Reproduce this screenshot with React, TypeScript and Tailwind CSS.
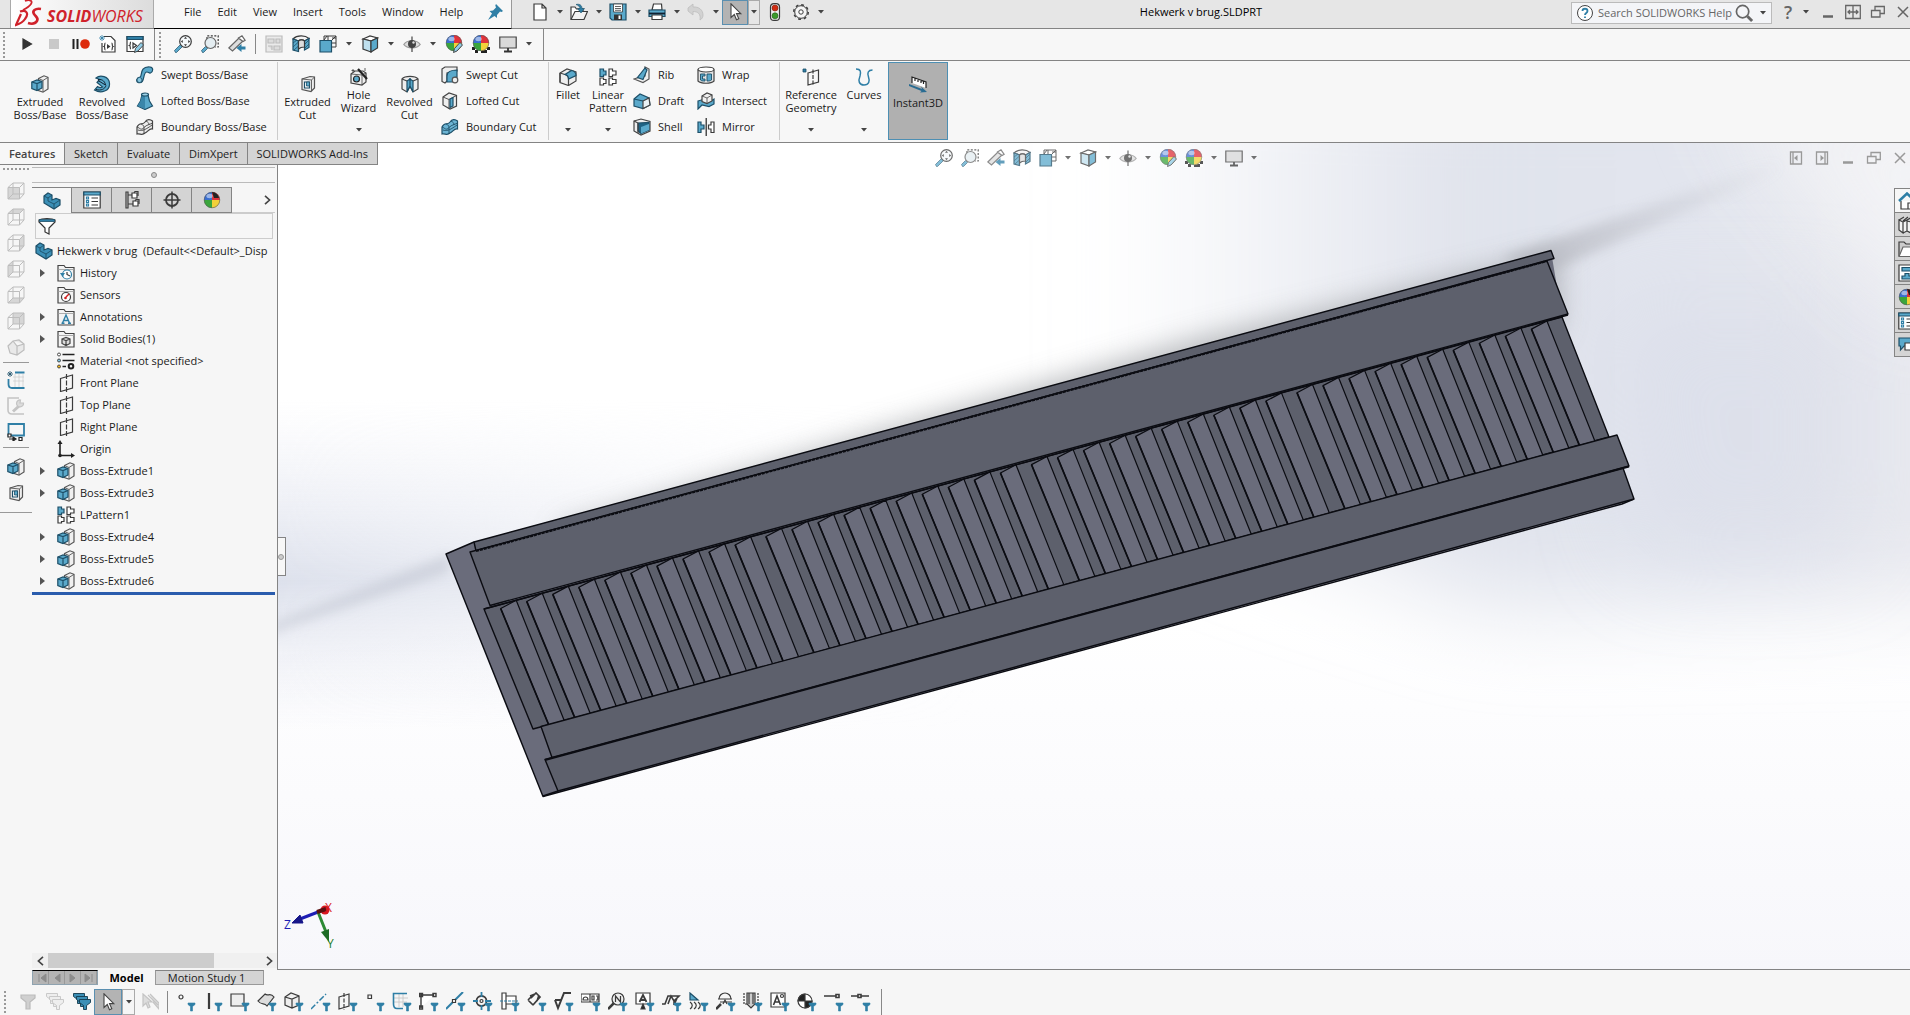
import React from "react";
import clsx from "clsx";

type IconProps = { className?: string };
type IconType = React.FC<IconProps>;

const INK = "#3b3b3b";
const BLUE = "#5aa9cb";
const DEEP = "#1d4f68";
const STEEL = "#2f7fa6";

/* Every glyph is drawn on an 18 x 18 grid. */
const glyph = (children: React.ReactNode): IconType =>
  function Glyph({ className = "size-[18px]" }) {
    return (
      <svg viewBox="0 0 18 18" fill="none" stroke={INK} strokeWidth="1.2" className={clsx("shrink-0", className)} aria-hidden="true">
        {children}
      </svg>
    );
  };

const Ball = (
  <>
    <path d="M9 0A8 8 0 0 0 1 8H9Z" fill="#3a6fd0" stroke="none" />
    <path d="M9 0A8 8 0 0 1 17 8H9Z" fill="#e0323a" stroke="none" />
    <path d="M1 8A8 8 0 0 0 9 16V8Z" fill="#3aa53c" stroke="none" />
    <path d="M17 8A8 8 0 0 1 9 16V8Z" fill="#f2d13a" stroke="none" />
    <ellipse cx="6.5" cy="4" rx="3.2" ry="2.2" fill="#fff" opacity=".5" stroke="none" />
    <circle cx="9" cy="8" r="7.8" stroke="#555" strokeWidth=".6" />
  </>
);

const Pencil = <path d="M8.5 17.5L9.5 13.5L15 7.5L17.5 10L12 16Z" fill="#8fcbe4" stroke={INK} strokeWidth=".9" />;

const NewDoc = glyph(<path d="M3 1h8l4 4v12H3zM11 1v4h4" fill="#fff" />);
const OpenDoc = glyph(
  <>
    <path d="M1 16V4h4l1.5 2H13v3" fill="#fff" />
    <path d="M1 16.5L5 8.5h12.5L14 16.5z" fill="#f2f2f2" />
    <path d="M6 1.5c4-1 6 1 6 4h2.500L11 10 7.500 5.500H10c0-2-1.500-3-4-4z" fill={STEEL} stroke={DEEP} strokeWidth=".6" />
  </>
);
const Save = glyph(
  <>
    <path d="M1 1h16v16H3l-2-2z" fill={BLUE} stroke={DEEP} />
    <path d="M4.5 1h9v8h-9z" fill="#fff" stroke={INK} strokeWidth=".8" />
    <path d="M6 3.5h6M6 5.5h6M6 7.3h6" strokeWidth=".8" />
    <path d="M5 11.5h8V17H5z" fill="#333" stroke="none" />
    <path d="M9.5 12.5h2V16h-2z" fill="#fff" stroke="none" />
  </>
);
const Print = glyph(
  <>
    <path d="M4 7L5.5 1h8L14 7z" fill="#fff" />
    <path d="M1 7h16v6.5H1z" fill={BLUE} stroke={DEEP} />
    <path d="M1 10.5h16" stroke="#123" strokeWidth="1.8" />
    <path d="M4 12h10v4.5H4z" fill="#fff" />
  </>
);
const Undo = glyph(
  <path d="M1 5L6 1v3c6-.5 10 3 10 8 0 2-1 4-3 5 1-6-2-8.5-7-8.5V12L1 8z" fill="#d2d2d2" stroke="#bdbdbd" strokeWidth=".8" />
);
const Cursor = glyph(
  <path d="M5 .8V14.5L8.3 11.5L10.5 16.8L12.8 15.8L10.5 10.6H14.8Z" fill="#fff" stroke="#444" strokeWidth="1.1" />
);
const Traffic = glyph(
  <>
    <rect x="4.5" y=".6" width="9" height="16.8" rx="3.5" fill="#eee" />
    <circle cx="9" cy="5" r="3" fill="#d22c12" stroke="#7a1a0a" strokeWidth=".6" />
    <circle cx="9" cy="12.8" r="3" fill="#3b9a2b" stroke="#1c5a12" strokeWidth=".6" />
  </>
);
const Gear = glyph(
  <>
    <circle cx="9" cy="9" r="6.3" fill="#f5f5f5" strokeWidth="1" />
    <circle cx="9" cy="9" r="7.3" strokeDasharray="2.8 2.93" strokeWidth="1.4" />
    <circle cx="9" cy="9" r="2.2" fill="#fff" strokeWidth="1" />
  </>
);
const Pin = glyph(
  <path d="M10 1L17 8L15.5 9L14 8.5L11 12V15L8.5 13L2 17L6 10.5L3.5 8L7 7.5L10 4.500L9.3 2.5Z" fill={STEEL} stroke="none" />
);
const Play = glyph(<path d="M5 4L13.5 9L5 14Z" fill="#333" stroke="#333" />);
const Stop = glyph(<path d="M4 4h10v10H4z" fill="#c9c9c9" stroke="none" />);
const Record = glyph(
  <>
    <path d="M1.5 4v10M5.500 4v10" strokeWidth="2" stroke="#222" />
    <circle cx="13" cy="9" r="4.8" fill="#dd2a0c" stroke="none" />
  </>
);
const MacroNew = glyph(
  <>
    <path d="M5 1.5h7l4 4V17H3V8" fill="#fff" />
    <path d="M6.5 8c-1.5 0 0 3-1.5 3.5C6.5 12 5 15 6.5 15M12.5 8c1.5 0 0 3 1.5 3.5-1.5.5 0 3.5-1.5 3.5" />
    <path d="M8 9l3.5 2.5L8 14z" fill={INK} stroke="none" />
    <path d="M3 0v6M0 3h6M1 1l4 4M5 1L1 5" stroke={STEEL} strokeWidth=".8" />
  </>
);
const MacroEdit = glyph(
  <>
    <path d="M1 1.500h16v15H1z" fill="#fff" />
    <path d="M1 1.500h16v3H1z" fill={STEEL} stroke={DEEP} />
    <path d="M5 7c-1.500 0 0 3-1.500 3.500C5 11 3.500 14 5 14M7 8l3.500 2.500L7 13z" />
    {Pencil}
  </>
);
const ZoomFit = glyph(
  <>
    <path d="M1.5 17.5L.5 15.5L6.5 9.5L8.5 11.5L2.5 17.5Z" fill={BLUE} stroke={DEEP} strokeWidth=".7" />
    <circle cx="11.5" cy="6.500" r="5.8" fill="#f4f8fa" />
    <path d="M11.5 1.800l1.500 2h-3zM11.5 11.200l1.500-2h-3zM6.800 6.500l2-1.500v3zM16.200 6.500l-2-1.500v3z" fill={INK} stroke="none" />
  </>
);
const ZoomArea = glyph(
  <>
    <path d="M6 4V.8h11.2V12H14" strokeDasharray="2 1.5" />
    <path d="M1.500 17.500L.5 15.500L4.500 11.500L6.500 13.500L2.500 17.500Z" fill={BLUE} stroke={DEEP} strokeWidth=".7" />
    <circle cx="9.5" cy="8" r="5.5" fill="#e4edf1" stroke="#666" />
  </>
);
const PrevView = glyph(
  <>
    <path d="M.8 13L11 3l4 3L4.500 16Z" fill="#ddd" stroke="#666" />
    <path d="M10.5 3L14 .8l3.200 4.500L15 6.500Z" fill="#fff" stroke="#666" />
    <path d="M17.500 11.500h-4V9L8.500 13l5 4v-2.500h4Z" fill={STEEL} stroke="none" />
  </>
);
const Drawing = glyph(
  <g stroke="#bcbcbc">
    <path d="M1 1h16v16H1z" fill="#eaeaea" />
    <path d="M3 4h6v4H3zM11 4h4v4h-4zM3 11h4v4M9 11h6v4H9z" fill="#dcdcdc" />
  </g>
);
const Section = glyph(
  <>
    <path d="M1 4C5 0 13 0 17 3.5L12.5 6C11 4.5 8 4.5 6.5 6Z" fill="#f4f4f4" />
    <path d="M1 4L6.5 6V16.5L1 15Z" fill={BLUE} stroke={DEEP} />
    <path d="M17 3.5L12.5 6V15L17 12.5Z" fill={BLUE} stroke={DEEP} />
    <path d="M6.5 6c1.5-1.5 4.500-1.500 6 0v6c-2 0-4 0-6 2z" fill="#ddd" />
    <path d="M1 8l4-3M1 12l5.500-5M2 15l4.500-4M13 9l4-4M13 13l4-4" stroke={DEEP} strokeWidth=".8" />
  </>
);
const ViewCube = glyph(
  <>
    <path d="M5 5V1h12v11h-4M13 5l4-4M9 5V1M13 3h4M5 5L8 1M13 8h4" strokeWidth="1" />
    <path d="M1 5.500h11.500V17H1z" fill={BLUE} stroke={DEEP} />
  </>
);
const ShadedCube = glyph(
  <>
    <path d="M2 4L9 1L16.5 3L10 6Z" fill="#fff" />
    <path d="M2 4L10 6V17L2 14Z" fill="#bfe0ee" />
    <path d="M10 6L16.500 3V13L10 17Z" fill={BLUE} />
  </>
);
const Eye = glyph(
  <>
    <path d="M.8 9.500C4 4.500 14 4.500 17.200 9.500C14 14 4 14 .8 9.500Z" fill="#ddd" stroke="#999" />
    <circle cx="9" cy="9" r="4" fill="#444" stroke="none" />
    <path d="M9 1.500V17" stroke="#444" />
    <circle cx="10.5" cy="7.5" r="1.2" fill="#ddd" stroke="none" />
  </>
);
const Appearance = glyph(<>{Ball}{Pencil}</>);
const Scene = glyph(
  <>
    <path d="M0 9h18v9H0z" fill="#222" stroke="none" />
    <path d="M0 9h3v3H0zM15 9h3v3h-3zM3 12h3v3H3zM12 12h3v3h-3zM0 15h3v3H0zM6 15h3v3H6zM15 15h3v3h-3z" fill="#fff" stroke="none" />
    {Ball}
  </>
);
const Monitor = glyph(
  <>
    <path d="M.8 2h16.400v11H.8z" fill="#d9d9d9" stroke="#444" />
    <path d="M9 13v3M5 16.500h8" stroke="#333" strokeWidth="1.800" />
  </>
);

const Extrude = glyph(
  <>
    <path d="M7.500 3.500L13 .8L17 2.300V14L12 17.200L7.500 15.500Z" fill="#f0f0f0" stroke="#555" />
    <path d="M12 5.500V17M12 5.500L17 2.300M7.500 3.500L12 5.500" stroke="#555" strokeWidth=".9" />
    <path d="M.8 7L6 5L11 6.500V13L6 15.500L.8 13.500Z" fill={BLUE} stroke={DEEP} />
    <path d="M.8 7L6 8.500L11 6.500M6 8.500V15.500" stroke={DEEP} />
  </>
);
const Revolve = glyph(
  <>
    <path d="M3 3C7-.5 16 1 16.5 8.5C17 16 8 19 1.500 15L4.500 11.500C6 12.500 8 13 9.500 12L4 7.500L6.500 4.500Z" fill={BLUE} stroke={DEEP} />
    <path d="M5 4.500C10 4 12 7 12.500 10L5 5.500M3 14.500c5 1.500 9-.5 10-4" stroke="#123" strokeWidth="1" />
  </>
);
const Sweep = glyph(
  <>
    <path d="M2 16.500C10 18.500 6 6 11 6C12.500 6 13 7.500 14.500 7C17 6 18 1.500 14 1C3 0 6.500 11 4 11C1 11-.5 15 2 16.500Z" fill={BLUE} stroke={DEEP} />
    <circle cx="3.500" cy="14" r="2.500" fill="#86c6e0" stroke={DEEP} strokeWidth=".8" />
  </>
);
const Loft = glyph(
  <>
    <path d="M6 3L4.500 9L1.500 14L9 17.500L16.500 14L13.500 9L12 3Z" fill={BLUE} stroke={DEEP} />
    <path d="M9 4V17L1.500 14L4.500 9L6 3Z" fill="#3a86aa" stroke="none" />
    <ellipse cx="9" cy="2.500" rx="3.500" ry="1.500" fill="#9cd2e8" stroke={DEEP} />
  </>
);
const boundary = (fill: string, edge: string) =>
  glyph(
    <>
      <path d="M1 9C4 3 6 8 9 4C11 1 14 1 16.500 3V11C13 10 12 14 9 15C6 18 4 15 1 16Z" fill={fill} stroke={edge} />
      <path d="M1 9C4 10 5 13 8 9.500C11 6.500 13 7 16.500 5M5 6c3 1 3 3 3 4v6M10 3c2 1 3 2 3 4M2 12c3 1 6 1 14-5" stroke={edge} strokeWidth=".9" />
    </>
  );
const Boundary = boundary("#ededed", "#444");
const BoundaryCutIcon = boundary("#6bb4d4", DEEP);
const ExtrudeCutIcon = glyph(
  <>
    <path d="M3 4L11 1.500L15.500 2V13L12 16.500L3 14.500Z" fill="#eee" stroke="#555" />
    <path d="M12.500 5L15.500 2M12.500 5V16M3 4L12.500 5" stroke="#555" strokeWidth=".9" />
    <path d="M5.500 7H10.500V13H5.500z" fill="#fff" stroke={DEEP} />
    <path d="M7.500 7h3v4h-3z" fill={BLUE} stroke={DEEP} strokeWidth=".8" />
  </>
);
const HoleWizardIcon = glyph(
  <>
    <path d="M1 6L5 3H13L16 5V14L12 17L1 15Z" fill="#eee" stroke="#444" />
    <path d="M12 7V17M1 6l11 1 4-2" stroke="#444" strokeWidth=".8" />
    <circle cx="6.500" cy="11" r="3" fill={BLUE} stroke="#222" />
    <path d="M8 1l9 10" stroke="#222" strokeWidth="2.200" />
    <path d="M3 1v3M1.500 2.500h3M15 0v3" strokeWidth=".8" />
  </>
);
const RevolveCutIcon = glyph(
  <>
    <path d="M1 4C4 .5 14 .5 17 4V14L12 17L9 11L6 17L1 14Z" fill="#eee" stroke="#444" />
    <path d="M6 6L9 4V11L6 17ZM12 6L9 4V11L12 17Z" fill={BLUE} stroke={DEEP} />
    <path d="M1 4L6 6M17 4L12 6" stroke="#444" />
  </>
);
const SweepCutIcon = glyph(
  <>
    <path d="M1 3L4 1H16V5L6 7V15L4 17L1 15.500Z" fill="#eee" stroke="#444" />
    <path d="M6 16V10C6 6 10 4 16 4V11C13 11 12 13 12 16Z" fill={BLUE} stroke={DEEP} />
    <circle cx="14" cy="14" r="2.800" fill="#eee" stroke="#555" />
  </>
);
const LoftCutIcon = glyph(
  <>
    <path d="M2 5L8 1L15.500 3.500V14L9 17L2 13Z" fill="#eee" stroke="#444" />
    <path d="M2 5L8 7.500V17M8 7.500L15.500 3.500" stroke="#444" strokeWidth=".9" />
    <path d="M9 7L12 5.500V14L9 15.500Z" fill={BLUE} stroke={DEEP} />
  </>
);
const FilletIcon = glyph(
  <>
    <path d="M1 5L8 1L17 4V13L9.500 17.500L1 14.500Z" fill="#eee" stroke="#444" />
    <path d="M1 5L6 6.500C9 7.500 9.500 9 9.500 11V17.500M1 5V14" stroke="#444" />
    <path d="M6 6.500C9 7 9.500 9 9.500 11L17 7.500C17 5 15 3 12.500 2.500Z" fill={BLUE} stroke={DEEP} />
  </>
);
const PatternIcon = glyph(
  <>
    <path d="M1 1h3.500v2H7v4H4.500v1.500H1z" fill={BLUE} stroke={DEEP} />
    <path d="M10 1h3.500v2H17v4h-3.500v1.500H10zM1 10h3.500v1.500H7v4H4.500V17H1zM10 10h3.500v1.500H17v4h-3.500V17H10z" fill="#fff" />
  </>
);
const RibIcon = glyph(
  <>
    <path d="M1 13L10 16.500L16 13V3L12 1V10L4 12Z" fill="#eee" stroke="#555" />
    <path d="M12 2L4.500 11.500L10 13.500L14 4Z" fill={BLUE} stroke={DEEP} />
  </>
);
const DraftIcon = glyph(
  <>
    <path d="M1 7L7 2L16 6L17 13L10 16.500L1 14Z" fill={BLUE} stroke={DEEP} />
    <path d="M10 9L16 6L17 13L10 16.500Z" fill="#e9f2f6" stroke="#444" />
    <path d="M1 7L10 9" stroke={DEEP} />
  </>
);
const ShellIcon = glyph(
  <>
    <path d="M1 3L8 1L17 3.500V13L8 17L1 13Z" fill="#eee" stroke="#444" />
    <path d="M5 5L16 4.500V12L8 15.500L5 13Z" fill="#1f6384" stroke={DEEP} />
    <path d="M8 9L16 6V12L8 15.500Z" fill={BLUE} stroke="none" />
    <path d="M1 3L5 5v10" stroke="#444" />
  </>
);
const WrapIcon = glyph(
  <>
    <path d="M1 3.500V15C4 18 14 18 17 15V3.500" fill="#e3e3e3" stroke="#444" />
    <ellipse cx="9" cy="3.500" rx="8" ry="2.500" fill="#fff" stroke="#444" />
    <path d="M3.500 8H8V10H5.500V13H8V15C6 15 4 15 3.500 14ZM10 8H14.500V14C13 15 12 15 10 15Z" fill={BLUE} stroke={DEEP} strokeWidth=".9" />
  </>
);
const IntersectIcon = glyph(
  <>
    <path d="M1 9L6 7.500L14 9L17 7V12L12 14.500L5 13L1 17Z" fill={BLUE} stroke={DEEP} />
    <path d="M5 4L10 1L15 3V9L10 11.500L5 9.500Z" fill="#f0f0f0" stroke="#444" />
    <path d="M5 4L10 6L15 3M10 6V11" stroke="#444" strokeWidth=".8" />
  </>
);
const MirrorIcon = glyph(
  <>
    <path d="M1 4H4V7H7V11H4V14.500H1Z" fill={BLUE} stroke={DEEP} />
    <path d="M17 4H14V7H11.500V11H14V14.500H17Z" fill="#fff" />
    <path d="M9.200 0V18" stroke="#222" />
  </>
);
const RefGeometryIcon = glyph(
  <>
    <path d="M1 1h3v3H1z" fill={STEEL} stroke={DEEP} strokeWidth=".8" />
    <path d="M6 5L16.500 2V14L6 17Z" />
    <path d="M11 1.500V18" strokeDasharray="4 1.500" />
  </>
);
const CurvesIcon = glyph(
  <path d="M1 1C6 1 6 4 5 8C3 13 4 17 9 17C14 17 15 13 13.500 9C12 5 13 2 17.500 2" stroke={STEEL} strokeWidth="1.500" />
);
const Instant3DIcon = glyph(
  <>
    <path d="M3 1L17 6V12L3 7Z" fill="#fff" stroke="none" />
    <path d="M3 7V1L17 6V12M6 2v3M9 3v3M12 4v3M14.500 5v3" stroke="#222" />
    <path d="M0 8L13 13L12 10.500L18 16L11 16.500L12.500 15L0 10Z" fill="#2a6c92" stroke="none" />
  </>
);

const PartIcon = glyph(
  <>
    <path d="M1 4L5 1L9 3V8L13 6.500L17 8V13L11 17L1 11Z" fill="#3b8fb6" stroke={DEEP} />
    <path d="M1 4L5 6V9L11 12V17M5 6L9 3M11 12L17 8" stroke={DEEP} strokeWidth=".9" />
  </>
);
const PropertyIcon = glyph(
  <>
    <path d="M.8 1h16.400v16H.8z" fill="#fff" />
    <path d="M.8 1h16.400v3H.8z" fill={BLUE} stroke={DEEP} />
    <path d="M3.500 6h2v2h-2zM3.500 9.500h2v2h-2zM3.500 13h2v2h-2z" stroke={STEEL} />
    <path d="M8.500 7H15M8.500 10.500H15M8.500 14H15" />
  </>
);
const ConfigIcon = glyph(
  <>
    <path d="M3 1v16h2V1zM5 4h4M5 13h5" />
    <path d="M9 2h5v5H9zM10 10h5v5h-5z" fill="#fff" />
    <path d="M11 2l1-1.500h3V5M12 10l1-1.500h3V13" />
  </>
);
const TargetIcon = glyph(
  <>
    <circle cx="9" cy="9" r="6" strokeWidth="1.800" />
    <path d="M9 .5v17M.5 9h17" strokeWidth="1.500" />
  </>
);
const BallIcon = glyph(
  <g transform="translate(0 1)">
    {Ball}
    <path d="M9 0A8 8 0 0 1 16 6L11 6Z" fill="#222" stroke="none" />
  </g>
);
const FunnelIcon = glyph(
  <>
    <path d="M1 3C4 1 14 1 17 3V5L11 11V17L7 15V11L1 5Z" fill="#fff" stroke="#333" />
    <path d="M1.500 2.500h15v2h-15z" fill={STEEL} stroke={DEEP} strokeWidth=".8" />
  </>
);
const folder = (inner: React.ReactNode) =>
  glyph(
    <>
      <path d="M1 3V1.500H7L8.500 3.500H17V17H1Z" fill="#f3f3f3" stroke="#444" />
      <path d="M1 5.500H17" stroke="#999" strokeWidth=".8" />
      {inner}
    </>
  );
const HistoryIcon = folder(
  <>
    <circle cx="10" cy="10.500" r="4.500" stroke={STEEL} fill="#fff" />
    <path d="M10 8v2.500l3 1.500" />
    <path d="M3 9h5l-2.500 4z" fill={STEEL} stroke="none" />
  </>
);
const SensorsIcon = folder(
  <>
    <circle cx="9" cy="11" r="4.500" fill="#fff" />
    <path d="M9 11l3-3" stroke="#d02020" strokeWidth="1.500" />
    <circle cx="8.500" cy="12" r="1.300" fill="#d02020" stroke="none" />
  </>
);
const AnnotationsIcon = folder(
  <path d="M5.500 15L9 7L12.500 15M6.500 12.500h5M4.500 15.300h3M11 15.300h3" stroke={STEEL} strokeWidth="1.400" />
);
const BodiesIcon = folder(
  <path d="M5 9L9 7.500L13 9V13.500L9 15.500L5 13.500ZM5 9L9 10.500L13 9M9 10.500V15.500" fill="#ddd" stroke="#444" />
);
const MaterialIcon = glyph(
  <>
    <circle cx="2" cy="2.500" r="1.500" fill="#fff" strokeWidth=".9" />
    <circle cx="2" cy="8.500" r="1.500" fill="#7cc5e0" strokeWidth=".9" />
    <circle cx="2" cy="14.500" r="1.500" fill="#f0b820" strokeWidth=".9" />
    <path d="M5.500 2.500H17.500M5.500 8.500H17.500M5.500 14.500H9" stroke="#222" strokeWidth="1.500" />
    <circle cx="14" cy="14.200" r="2.300" stroke="#222" strokeWidth="2" />
  </>
);
const PlaneIcon = glyph(
  <>
    <path d="M3.500 4.500L15.500 1V14L3.500 17.500Z" />
    <path d="M9.500 0V18" strokeDasharray="5 1.500" />
  </>
);
const OriginIcon = glyph(
  <>
    <path d="M3 3V15.500H15" stroke="#222" strokeWidth="1.600" />
    <path d="M3 0L5.500 4H.5ZM18 15.500L14 18V13Z" fill="#222" stroke="none" />
    <circle cx="3" cy="15.500" r="1.800" fill="#222" stroke="none" />
  </>
);

/* Standard-view cubes of the side bar, one shaded face each. */
const cube = (face: string) =>
  glyph(
    <g stroke="#bdbdbd" strokeWidth="1">
      <path d={face} fill="#d6d6d6" stroke="none" />
      <path d="M1 5.500H12.500V17H1ZM6 1H17V12L12.500 17M1 5.500L6 1M12.500 5.500L17 1M6 1V12H17M1 17L6 12" />
    </g>
  );
const sideCubes = [
  cube("M1 5.500H12.500V17H1Z"),
  cube("M1 5.500L6 1H17L12.500 5.500Z"),
  cube("M12.500 5.500L17 1V12L12.500 17Z"),
  cube("M1 5.500L6 1V12L1 17Z"),
  cube("M1 17L6 12H17L12.500 17Z"),
  cube("M6 1H17V12H6Z"),
  glyph(<path d="M1 8L6 3L12 2L17 6V12L10 17L3 15ZM6 3L10 8L17 6M10 8V17" fill="#e9e9e9" stroke="#bdbdbd" />),
];
const SketchIcon = glyph(
  <>
    <path d="M6 6h11M6 10h11M8 3v13M12 3v13M16 3v13" stroke="#ccc" strokeWidth=".7" />
    <path d="M8 1.500H17.500M1.500 8V13Q1.500 17 5 17H17.500" stroke={STEEL} strokeWidth="1.800" />
    <path d="M3 0v6M0 3h6M1 1l4 4M5 1L1 5" stroke={DEEP} strokeWidth=".8" />
  </>
);
const RepairIcon = glyph(
  <g stroke="#c4c4c4">
    <path d="M12 1H1V13Q1 17 5 17H17" strokeWidth="1.600" />
    <path d="M6 14.500L12 9" strokeWidth="3" />
    <path d="M16.500 6a3.500 3.500 0 1 1-3-3l-.5 3z" fill="#dcdcdc" />
  </g>
);
const ConvertIcon = glyph(
  <>
    <path d="M1.500 1H17V12.500H1.500Z" stroke={STEEL} strokeWidth="1.800" />
    <path d="M1 11h3v3H1zM12 14.500h3v3h-3z" fill="#fff" stroke="#222" />
    <path d="M2 16H7M6 14L9 16L6 18Z" fill="#222" stroke="#222" />
  </>
);

const Caret: IconType = ({ className }) => (
  <svg viewBox="0 0 6 4" className={clsx("h-1 w-1.5 shrink-0 fill-[#444]", className)} aria-hidden="true">
    <path d="M0 0H6L3 3.500Z" />
  </svg>
);

const IconButton: React.FC<{ icon: IconType; label: string; className?: string }> = ({ icon: I, label, className }) => (
  <button type="button" aria-label={label} className={clsx("flex shrink-0 items-center justify-center", className)}>
    <I />
  </button>
);

const CaretButton: React.FC<{ label: string; className?: string }> = ({ label, className }) => (
  <button type="button" aria-label={label} className={clsx("flex shrink-0 items-center justify-center", className)}>
    <Caret />
  </button>
);

const Grip: React.FC<{ className?: string }> = ({ className }) => (
  <span className={clsx("shrink-0 bg-[radial-gradient(circle,#999_1px,transparent_1px)] bg-[size:4px_4px]", className)} />
);

const Divider: React.FC<{ className?: string }> = ({ className = "bg-[#888]" }) => <span className={clsx("w-px shrink-0", className)} />;

const WindowGlyph: React.FC<{ kind: string }> = ({ kind }) => (
  <svg viewBox="0 0 16 16" fill="none" stroke="currentColor" strokeWidth="1.300" className="size-4" aria-hidden="true">
    {kind === "min" && <path d="M3 12.500H13" strokeWidth="2.500" />}
    {kind === "span" && <path d="M.7 1.500H15.300V14.500H.7ZM8 1.500V14.500M3 8H13M5 6L3 8L5 10M11 6L13 8L11 10" />}
    {kind === "restore" && <path d="M1.500 6.500H10V13H1.500ZM5 6.500V2.500H14.300V9.500H10" />}
    {kind === "close" && <path d="M3 3L13 13M13 3L3 13" strokeWidth="1.500" />}
    {kind === "left" && (
      <>
        <path d="M2.500 2H13.500V14H2.500ZM5 2V14" />
        <path d="M9.500 5V11L6 8Z" fill="currentColor" stroke="none" />
      </>
    )}
    {kind === "right" && (
      <>
        <path d="M2.500 2H13.500V14H2.500ZM11 2V14" />
        <path d="M6.500 5V11L10 8Z" fill="currentColor" stroke="none" />
      </>
    )}
  </svg>
);

const menus = ["File", "Edit", "View", "Insert", "Tools", "Window", "Help"];

const quickTools: { icon: IconType; label: string }[] = [
  { icon: NewDoc, label: "New" },
  { icon: OpenDoc, label: "Open" },
  { icon: Save, label: "Save" },
  { icon: Print, label: "Print" },
  { icon: Undo, label: "Undo" },
];

const TitleBar = () => (
  <header className="flex h-[29px] shrink-0 items-stretch border-b border-[#848484] bg-[#e6e6e6]">
    <div className="ml-2.5 flex w-36 shrink-0 items-center gap-1 overflow-hidden border-x border-[#aaa] bg-gradient-to-r from-white to-[#dcdcdc] pl-1 text-[#d0222b]">
      <svg viewBox="0 0 28 28" className="h-7 w-7 shrink-0" fill="none" stroke="#d0222b" aria-hidden="true">
        <path d="M10 1C15-1 18 1 16 4C14 7 10 9 8 10" strokeWidth="1.800" />
        <path d="M5 11.500C12 9 14 14 10 19C8 22 4 24 1 25L6 14" strokeWidth="2.200" />
        <path d="M26 9C20 8 17 11 19 14C21 17 24 18 22 21C20 24 16 24 13 23" strokeWidth="2.600" />
      </svg>
      <span className="pt-1 text-[16px] leading-5 italic">
        <b>SOLID</b>WORKS
      </span>
    </div>
    <nav className="-mb-px flex w-[358px] shrink-0 items-center gap-4 border-r border-b border-r-[#999] border-b-black bg-[#f7f7f7] pb-1 pl-7.5">
      {menus.map((menu) => (
        <button key={menu} type="button">
          {menu}
        </button>
      ))}
      <IconButton icon={Pin} label="Pin menu" className="ml-2 w-4" />
    </nav>
    <div className="flex shrink-0 items-center pb-1 pl-[19px]">
      {quickTools.map((tool) => (
        <React.Fragment key={tool.label}>
          <IconButton icon={tool.icon} label={tool.label} className="w-[18px]" />
          <CaretButton label={`${tool.label} options`} className="w-[21px]" />
        </React.Fragment>
      ))}
      <div className="-ml-1 flex">
        <IconButton icon={Cursor} label="Select" className="h-[25px] w-[26px] border border-[#5a8fb0] bg-[#b3b3b3]" />
        <CaretButton label="Select options" className="h-[25px] w-3 border border-[#aaa]" />
      </div>
      <IconButton icon={Traffic} label="Rebuild" className="ml-1.5 w-[18px]" />
      <IconButton icon={Gear} label="Options" className="ml-2 w-[18px]" />
      <CaretButton label="More options" className="w-[21px]" />
    </div>
    <h1 className="flex-1 self-center pb-1 text-center text-black">Hekwerk v brug.SLDPRT</h1>
    <div className="my-0.5 mb-1 flex w-[201px] shrink-0 items-center border border-[#bbb] bg-[#f4f5f8] text-[#666]">
      <svg viewBox="0 0 18 18" className="mx-1 size-[18px] shrink-0" fill="#fff" stroke="#444" aria-hidden="true">
        <circle cx="9" cy="9" r="7.500" />
        <path d="M6.500 7C6.500 4 11.500 4 11.500 7C11.500 9 9 9 9 11M9 12.500V14" fill="none" stroke={STEEL} strokeWidth="1.800" />
      </svg>
      <input aria-label="Search help" placeholder="Search SOLIDWORKS Help" className="w-0 flex-1 bg-transparent outline-none placeholder:text-[#666]" />
      <svg viewBox="0 0 20 20" className="size-[19px] shrink-0" fill="none" stroke="#666" strokeWidth="1.800" aria-hidden="true">
        <circle cx="8" cy="8" r="6.500" />
        <path d="M13 13L18 18" strokeWidth="3" />
      </svg>
      <CaretButton label="Search options" className="w-[17px]" />
    </div>
    <div className="flex w-[138px] shrink-0 items-center overflow-hidden pb-1 text-[#666]">
      <button type="button" className="ml-3 w-3 text-lg font-semibold">
        ?
      </button>
      <CaretButton label="Help options" className="ml-2 w-3" />
      <div className="ml-2 flex shrink-0 gap-[9px]">
        {["min", "span", "restore", "close"].map((kind) => (
          <button key={kind} type="button" aria-label={kind}>
            <WindowGlyph kind={kind} />
          </button>
        ))}
      </div>
    </div>
  </header>
);

const viewTools: { icon: IconType; label: string; menu?: boolean }[] = [
  { icon: ZoomFit, label: "Zoom to fit" },
  { icon: ZoomArea, label: "Zoom to area" },
  { icon: PrevView, label: "Previous view" },
  { icon: Section, label: "Section view" },
  { icon: ViewCube, label: "View orientation", menu: true },
  { icon: ShadedCube, label: "Display style", menu: true },
  { icon: Eye, label: "Hide or show items", menu: true },
  { icon: Appearance, label: "Edit appearance" },
  { icon: Scene, label: "Apply scene", menu: true },
  { icon: Monitor, label: "View settings", menu: true },
];

const ToolbarRow = () => (
  <div className="flex h-8 shrink-0 items-center border-b border-[#848484] bg-[#f7f7f7]">
    <Grip className="ml-0.5 h-7 w-1" />
    <div className="ml-3 flex gap-[9px] pb-0.5">
      {[Play, Stop, Record, MacroNew, MacroEdit].map((icon, i) => (
        <IconButton key={i} icon={icon} label={`Macro ${i + 1}`} className="w-[18px]" />
      ))}
    </div>
    <Divider className="ml-2.5 h-full bg-[#888]" />
    <Grip className="ml-[3px] h-7 w-1" />
    <div className="ml-3 flex items-center pb-0.5">
      {viewTools.map((tool, i) => (
        <React.Fragment key={tool.label}>
          <IconButton icon={tool.icon} label={tool.label} className="mr-[9px] w-[18px]" />
          {tool.menu && tool.icon !== Scene && <CaretButton label={`${tool.label} menu`} className="mr-[9px] w-1.5" />}
          {i === 2 && (
            <>
              <Divider className="mr-[9px] h-5 bg-[#888]" />
              <IconButton icon={Drawing} label="Drawing" className="mr-[9px] w-[18px]" />
            </>
          )}
        </React.Fragment>
      ))}
    </div>
    <Divider className="ml-0.5 h-full bg-[#888]" />
  </div>
);

const BigTool: React.FC<{ icon: IconType; lines: string[]; width: string; menu?: boolean; active?: boolean }> = ({
  icon: I,
  lines,
  width,
  menu,
  active,
}) => (
  <button
    type="button"
    className={clsx(
      "relative flex h-[78px] shrink-0 flex-col items-center leading-[13px]",
      width,
      menu ? "pt-1.5" : "pt-[13px]",
      active && "border border-[#4d8fb3] bg-[#b0b0b0]"
    )}
  >
    <I />
    <span className="mt-0.5">
      {lines.map((line) => (
        <span key={line} className="block">
          {line}
        </span>
      ))}
    </span>
    {menu && <Caret className="absolute bottom-2" />}
  </button>
);

const ToolList: React.FC<{ items: [IconType, string][]; width: string }> = ({ items, width }) => (
  <div className={clsx("flex h-[78px] shrink-0 flex-col", width)}>
    {items.map(([I, label]) => (
      <button key={label} type="button" className="flex h-[26px] items-center gap-[7px] whitespace-nowrap">
        <I />
        {label}
      </button>
    ))}
  </div>
);

const Ribbon = () => (
  <section aria-label="Features" className="flex h-[82px] shrink-0 items-start border-b border-[#848484] bg-[#f7f7f7] pt-px">
    <BigTool icon={Extrude} lines={["Extruded", "Boss/Base"]} width="ml-2 w-16" />
    <BigTool icon={Revolve} lines={["Revolved", "Boss/Base"]} width="w-[60px]" />
    <ToolList
      width="ml-1 w-[141px]"
      items={[
        [Sweep, "Swept Boss/Base"],
        [Loft, "Lofted Boss/Base"],
        [Boundary, "Boundary Boss/Base"],
      ]}
    />
    <Divider className="h-[78px] bg-[#ccc]" />
    <BigTool icon={ExtrudeCutIcon} lines={["Extruded", "Cut"]} width="ml-1 w-[51px]" />
    <BigTool icon={HoleWizardIcon} lines={["Hole", "Wizard"]} width="w-[51px]" menu />
    <BigTool icon={RevolveCutIcon} lines={["Revolved", "Cut"]} width="w-[51px]" />
    <ToolList
      width="ml-1.5 w-[107px]"
      items={[
        [SweepCutIcon, "Swept Cut"],
        [LoftCutIcon, "Lofted Cut"],
        [BoundaryCutIcon, "Boundary Cut"],
      ]}
    />
    <Divider className="h-[78px] bg-[#ccc]" />
    <BigTool icon={FilletIcon} lines={["Fillet"]} width="w-[38px]" menu />
    <BigTool icon={PatternIcon} lines={["Linear", "Pattern"]} width="w-[42px]" menu />
    <ToolList
      width="ml-1 w-16"
      items={[
        [RibIcon, "Rib"],
        [DraftIcon, "Draft"],
        [ShellIcon, "Shell"],
      ]}
    />
    <ToolList
      width="w-[82px]"
      items={[
        [WrapIcon, "Wrap"],
        [IntersectIcon, "Intersect"],
        [MirrorIcon, "Mirror"],
      ]}
    />
    <Divider className="h-[78px] bg-[#ccc]" />
    <BigTool icon={RefGeometryIcon} lines={["Reference", "Geometry"]} width="w-[62px]" menu />
    <BigTool icon={CurvesIcon} lines={["Curves"]} width="w-[44px]" menu />
    <BigTool icon={Instant3DIcon} lines={["Instant3D"]} width="ml-0.5 w-[60px]" active />
  </section>
);

const ribbonTabs = ["Features", "Sketch", "Evaluate", "DimXpert", "SOLIDWORKS Add-Ins"];

const RibbonTabs = () => (
  <div role="tablist" className="relative z-10 flex h-[22px] w-[378px] shrink-0 border-b border-[#848484]">
    {ribbonTabs.map((tab, i) => (
      <button
        key={tab}
        type="button"
        role="tab"
        aria-selected={i === 0}
        className={clsx(
          "flex-auto border-r border-[#848484] whitespace-nowrap",
          i === 0 ? "bg-[#f7f7f7] font-semibold text-[#444]" : "bg-[#d4d4d4] text-[#222]"
        )}
      >
        {tab}
      </button>
    ))}
  </div>
);

const SideBar = () => (
  <aside className="flex w-8 shrink-0 flex-col items-center">
    <Grip className="mt-0.5 h-1 w-7" />
    <div className="mt-[11px] flex flex-col gap-2">
      {sideCubes.map((icon, i) => (
        <IconButton key={i} icon={icon} label={`Standard view ${i + 1}`} />
      ))}
    </div>
    <hr className="mt-1.5 w-[26px] border-[#999]" />
    <div className="mt-2 flex flex-col gap-2">
      <IconButton icon={SketchIcon} label="Sketch" />
      <IconButton icon={RepairIcon} label="Repair sketch" />
      <IconButton icon={ConvertIcon} label="Convert entities" />
    </div>
    <hr className="mt-1.5 w-[26px] border-[#999]" />
    <div className="mt-2.5 flex flex-col gap-2">
      <IconButton icon={Extrude} label="Extruded boss" />
      <IconButton icon={ExtrudeCutIcon} label="Extruded cut" />
    </div>
    <hr className="mt-2.5 w-full border-[#999]" />
  </aside>
);

const treeItems: { icon: IconType; label: string; open?: boolean }[] = [
  { icon: HistoryIcon, label: "History", open: true },
  { icon: SensorsIcon, label: "Sensors" },
  { icon: AnnotationsIcon, label: "Annotations", open: true },
  { icon: BodiesIcon, label: "Solid Bodies(1)", open: true },
  { icon: MaterialIcon, label: "Material <not specified>" },
  { icon: PlaneIcon, label: "Front Plane" },
  { icon: PlaneIcon, label: "Top Plane" },
  { icon: PlaneIcon, label: "Right Plane" },
  { icon: OriginIcon, label: "Origin" },
  { icon: Extrude, label: "Boss-Extrude1", open: true },
  { icon: Extrude, label: "Boss-Extrude3", open: true },
  { icon: PatternIcon, label: "LPattern1" },
  { icon: Extrude, label: "Boss-Extrude4", open: true },
  { icon: Extrude, label: "Boss-Extrude5", open: true },
  { icon: Extrude, label: "Boss-Extrude6", open: true },
];

const Chevron: React.FC<{ flip?: boolean }> = ({ flip }) => (
  <svg viewBox="0 0 8 12" className={clsx("h-2.5 w-[7px]", flip && "-scale-x-100")} fill="none" stroke="#444" strokeWidth="2" aria-hidden="true">
    <path d="M1 1L6.500 6L1 11" />
  </svg>
);

const FeatureTree = () => (
  <section aria-label="Feature tree" className="flex min-w-0 flex-1 flex-col">
    <div className="mt-0.5 mr-0.5 flex h-4 items-center justify-center border-y border-[#bbb]">
      <span className="size-1.5 rounded-full border border-[#888] bg-[#ccc]" />
    </div>
    <div role="tablist" className="mt-1 mr-0.5 flex h-[26px] shrink-0">
      {[PartIcon, PropertyIcon, ConfigIcon, TargetIcon, BallIcon].map((I, i) => (
        <button
          key={i}
          type="button"
          role="tab"
          aria-label={`Manager ${i + 1}`}
          aria-selected={i === 0}
          className={clsx(
            "flex w-10 items-center justify-center border-t border-r border-[#848484]",
            i > 0 && "border-b bg-[#d4d4d4]"
          )}
        >
          <I />
        </button>
      ))}
      <button type="button" aria-label="More tabs" className="flex flex-1 items-center justify-end border-b border-[#ccc] pr-1">
        <Chevron />
      </button>
    </div>
    <label className="mr-1 ml-[3px] flex h-[26px] items-center border border-[#ccc] pl-0.5">
      <FunnelIcon />
      <input aria-label="Filter tree" className="w-0 flex-1 bg-transparent pl-1 outline-none" />
    </label>
    <ul className="mt-px mr-0.5 border-b-[3px] border-[#2a5cad]">
      <li className="flex h-[22px] items-center gap-1 pl-[3px] whitespace-pre">
        <PartIcon />
        {"Hekwerk v brug  (Default<<Default>_Disp"}
      </li>
      {treeItems.map((item) => (
        <li key={item.label} className="flex h-[22px] items-center">
          <span className="flex w-[25px] shrink-0 pl-2">
            {item.open && (
              <svg viewBox="0 0 5 8" className="h-2 w-[5px] fill-[#555]" aria-hidden="true">
                <path d="M0 0L5 4L0 8Z" />
              </svg>
            )}
          </span>
          <item.icon />
          <span className="pl-[5px] whitespace-nowrap">{item.label}</span>
        </li>
      ))}
    </ul>
    <div className="mt-auto mb-0.5 flex h-[15px] items-center bg-[#f0f0f0]">
      <button type="button" aria-label="Scroll left" className="flex w-4 justify-center">
        <Chevron flip />
      </button>
      <div className="flex h-full flex-1">
        <span className="h-full w-[78%] bg-[#cdcdcd]" />
      </div>
      <button type="button" aria-label="Scroll right" className="flex w-4 justify-center">
        <Chevron />
      </button>
    </div>
  </section>
);

/* Railing model: four groups of ten balusters between the upper and lower rails. */
const TOP = (x: number) => 609 - 0.271 * (x - 484);
const BOTTOM = (x: number) => 729 - 0.271 * (x - 533);
const balusters = [500.7, 766, 1031.5, 1297].flatMap((start) => Array.from({ length: 10 }, (_, i) => start + i * 26.05));

const Railing = () => (
  <g stroke="#0b0c12" strokeWidth="1.400" strokeLinejoin="round">
    <path d="M446 554L474 542L1551 251L1562 317L1609 437L1634 499L1620 504L543 796.500Z" fill="#6a6c7b" stroke="none" />
    <path d="M474 542L446 554L543 796.500L1622 504L1634 499" fill="none" />
    <path d="M474 542L1551 250.500L1554 258.500L476 551Z" fill="#5d606c" />
    <path d="M484 609L1562 317L1609 437L533 729Z" fill="#5d606c" />
    {balusters.map((x) => (
      <g key={x}>
        <path
          d={`M${x} ${TOP(x) + 4}L${x + 15.5} ${TOP(x + 15.5)}L${x + 63.5} ${BOTTOM(x + 63.5)}L${x + 48} ${BOTTOM(x + 48)}Z`}
          fill="#6a6c7b"
          strokeWidth="1.200"
        />
        <path d={`M${x} ${TOP(x) + 4}L${x + 48} ${BOTTOM(x + 48)}`} strokeWidth="1.700" />
      </g>
    ))}
    <path d="M470 552L1547 261L1568 314L490 605.500Z" fill="#5d606c" />
    <path d="M476 551L1547 261" strokeWidth="2.200" strokeDasharray="3 1" />
    <path d="M484 609L1568 315" />
    <path d="M545 759.500L1623 468L1634 499L558 791Z" fill="#5d606c" />
    <path d="M541 726.500L1617 435L1629 466L552 757.500Z" fill="#5d606c" />
    <path d="M545 760L1629 466.500" strokeWidth="2" />
    <path d="M543 796L558 791" />
  </g>
);

const Scenery = () => (
  <>
    <defs>
      <linearGradient id="leftBand" x1="0" y1="0" x2="0" y2="1">
        <stop offset="0" stopColor="#e8eaf3" stopOpacity="0" />
        <stop offset=".55" stopColor="#dde1ec" />
        <stop offset="1" stopColor="#e8eaf3" stopOpacity="0" />
      </linearGradient>
      <linearGradient id="floor" x1="0" y1="0" x2="0" y2="1">
        <stop offset="0" stopColor="#fff" />
        <stop offset="1" stopColor="#f7f7fb" />
      </linearGradient>
      <linearGradient id="leftFade" x1="0" y1="0" x2="1" y2="0">
        <stop offset="0" stopColor="#fff" />
        <stop offset="1" stopColor="#000" />
      </linearGradient>
      <linearGradient id="rightSky" gradientUnits="userSpaceOnUse" x1="1100" y1="0" x2="1910" y2="0">
        <stop offset="0" stopColor="#e4e7ef" stopOpacity="0" />
        <stop offset=".45" stopColor="#e0e3ec" />
        <stop offset=".75" stopColor="#e2e5ee" />
        <stop offset="1" stopColor="#e8e9ef" />
      </linearGradient>
      <linearGradient id="streak" gradientUnits="userSpaceOnUse" x1="1540" y1="260" x2="1790" y2="168">
        <stop offset="0" stopColor="#b4b6be" />
        <stop offset="1" stopColor="#c8cad2" stopOpacity="0" />
      </linearGradient>
      <mask id="leftMask">
        <rect x="278" y="143" width="700" height="827" fill="url(#leftFade)" />
      </mask>
      <filter id="soft" x="-20%" y="-50%" width="140%" height="200%">
        <feGaussianBlur stdDeviation="14" />
      </filter>
      <filter id="haze" x="-30%" y="-50%" width="160%" height="200%">
        <feGaussianBlur stdDeviation="45" />
      </filter>
      <filter id="thin" x="-20%" y="-50%" width="140%" height="200%">
        <feGaussianBlur stdDeviation="6" />
      </filter>
    </defs>
    <rect x="278" y="143" width="1632" height="827" fill="#fff" />
    <rect x="278" y="620" width="1632" height="350" fill="url(#floor)" />
    <rect x="278" y="400" width="700" height="330" fill="url(#leftBand)" mask="url(#leftMask)" />
    <path d="M1100 60H2100V600L1500 610L1100 500Z" fill="url(#rightSky)" filter="url(#haze)" />
    <path d="M1600 300L1860 300V560L1640 560Z" fill="#d8dbe8" opacity=".5" filter="url(#haze)" />
    <path d="M1720 90H2000V300H1900Z" fill="#f6f6f8" opacity=".8" filter="url(#haze)" />
    <path d="M560 528L900 425L1200 338L1560 252V330L560 590Z" fill="#a2a4a8" opacity=".75" filter="url(#soft)" />
    <path d="M250 632L450 554V572L250 640Z" fill="#c6cad6" opacity=".7" filter="url(#thin)" />
    <path d="M1500 258L1780 160V172L1550 272Z" fill="url(#streak)" opacity=".75" filter="url(#thin)" />
  </>
);

const Triad = () => (
  <g>
    <path d="M318 912L300 919" stroke="#1d1db4" strokeWidth="3" />
    <path d="M292 923L300 915L303 923Z" fill="#17178a" stroke="#17178a" />
    <path d="M318 912L326 932" stroke="#2c8a34" strokeWidth="3" />
    <path d="M329 942L321 932L329 929Z" fill="#1d6b25" />
    <circle cx="325" cy="910" r="4.500" fill="#d81820" />
    <path d="M317 912L326 909" stroke="#5a1010" strokeWidth="4" />
    <g fontSize="12">
      <text x="284" y="929" fill="#1d1db4">Z</text>
      <text x="327" y="948" fill="#1d7b25">Y</text>
      <text x="325" y="912" fill="#d81820">X</text>
    </g>
  </g>
);

const HomeIcon = glyph(
  <>
    <path d="M3 9V17H15V9M10 17V11h4v6" fill="#fff" />
    <path d="M1 9L9 1.500L17 9" stroke={STEEL} strokeWidth="2.500" />
  </>
);
const LibraryIcon = glyph(
  <path d="M1 4L5 6V17L1 14ZM5 6L9 4V15L5 17M1 4L6 1M5 5L10 1M9 4L14 1M9 5L13 6V17L9 15M13 6L17 4V14L13 17" fill="#f4f4f4" />
);
const FolderIcon = glyph(
  <>
    <path d="M1 16V2H6L8 4H17V7" fill="#ccc" />
    <path d="M1 16.500L5 7H18V16.500Z" fill="#fff" stroke="#666" />
  </>
);
const PaletteIcon = glyph(
  <>
    <path d="M1 1H17V17H1Z" fill="#fff" />
    <path d="M4 3.500H14V7H4ZM7 9.500H11V12H14V15H4V12H7Z" fill={BLUE} stroke={DEEP} />
  </>
);
const ForumIcon = glyph(
  <>
    <path d="M1 2H14V10H6L2.500 14V10H1Z" fill={BLUE} stroke={DEEP} />
    <path d="M7 7H18V14H15V17L12 14H7Z" fill="#fff" />
  </>
);

const taskPane: [IconType, string][] = [
  [HomeIcon, "Resources"],
  [LibraryIcon, "Design library"],
  [FolderIcon, "File explorer"],
  [PaletteIcon, "View palette"],
  [BallIcon, "Appearances"],
  [PropertyIcon, "Custom properties"],
  [ForumIcon, "Forum"],
];

const Viewport = () => (
  <main className="relative min-w-0 flex-1 overflow-hidden border-b border-l border-[#848484]">
    <svg viewBox="278 143 1632 827" preserveAspectRatio="xMinYMin slice" className="absolute inset-0 size-full" role="img" aria-label="Railing model">
      <Scenery />
      <Railing />
      <Triad />
    </svg>
    <div className="absolute inset-x-0 top-1.5 flex items-center justify-center pl-3 opacity-75">
      {viewTools.map((tool) => (
        <React.Fragment key={tool.label}>
          <IconButton icon={tool.icon} label={tool.label} className="mr-2 w-[18px]" />
          {tool.menu && <CaretButton label={`${tool.label} menu`} className="mr-2 w-1.5" />}
        </React.Fragment>
      ))}
    </div>
    <div className="absolute top-[7px] right-0.5 flex gap-2.5 text-[#999]">
      {["left", "right", "min", "restore", "close"].map((kind) => (
        <button key={kind} type="button" aria-label={`Document ${kind}`}>
          <WindowGlyph kind={kind} />
        </button>
      ))}
    </div>
    <div className="absolute top-[45px] right-0 w-4 border-t border-l border-[#848484]">
      {taskPane.map(([icon, label], i) => (
        <div
          key={label}
          className={clsx("flex h-6 overflow-hidden border-b border-[#848484] pl-[3px]", i === 0 ? "bg-[#f7f7f7]" : "bg-[#d4d4d4]")}
        >
          <IconButton icon={icon} label={label} />
        </div>
      ))}
    </div>
    <button
      type="button"
      aria-label="Collapse panel"
      className="absolute top-[394px] -left-px flex h-[39px] w-[9px] items-center justify-center border border-l-0 border-[#848484] bg-[#f7f7f7]"
    >
      <span className="size-1.5 shrink-0 rounded-full border border-[#999] bg-[#ccc]" />
    </button>
  </main>
);

const navPaths = ["M5 3V11M12 3V11L7 7Z", "M10 3V11L5 7Z", "M4 3V11L9 7Z", "M10 3V11M3 3V11L8 7Z"];

const StudyTabs = () => (
  <div className="ml-8 flex h-[15px] shrink-0 items-stretch text-[12px] leading-[13px]">
    <div className="flex border border-t-black border-[#8fa3b0] bg-[#b4b4b4]">
      {navPaths.map((d) => (
        <button key={d} type="button" aria-label="Move tabs" className="flex w-4 items-center justify-center border-r border-[#999]">
          <svg viewBox="0 0 14 14" className="size-3.5" fill="#8c8c8c" stroke="#8c8c8c" aria-hidden="true">
            <path d={d} />
          </svg>
        </button>
      ))}
    </div>
    <button type="button" className="w-[57px] text-[11px] font-bold text-black">
      Model
    </button>
    <button type="button" className="w-[109px] border border-[#999] border-t-[#848484] bg-[#d4d4d4] pr-1.5 text-[11px]">
      Motion Study 1
    </button>
  </div>
);

/* Selection filters: a base drawing with the same small funnel at the lower right. */
const filterArt: React.ReactNode[] = [
  <circle cx="5" cy="5" r="2" />,
  <path d="M6 1V17" strokeWidth="2.200" />,
  <path d="M1 2H14V14H1Z" fill="#eee" />,
  <path d="M1 9L8 2C11 5 13 0 17 5L10 14C7 10 5 14 1 9Z" fill="#ddd" />,
  <path d="M1 5L7 1L15 4V13L8 16L1 13ZM1 5L8 7L15 4M8 7V16" fill="#eee" />,
  <path d="M0 17L15 2" stroke={STEEL} strokeWidth="1.500" strokeDasharray="6 2 2 2" />,
  <><path d="M1 5L11 2V14L1 17Z" /><path d="M6 1V18" strokeDasharray="4 1.500" /></>,
  <path d="M3 3h3.500v3.500H3z" />,
  <><path d="M7 2v13M11 2v13M2 6h14M2 10h13" stroke="#c4c4c4" strokeWidth=".8" /><path d="M15 1.500H1.500V12Q1.500 16.500 5 16.500H11" stroke={STEEL} strokeWidth="1.600" /></>,
  <path d="M2 16V3H15M.5 1.500h3v3h-3zM14 1.500h3v3h-3zM.5 14h3v3h-3z" fill="#fff" strokeWidth="1.400" />,
  <><path d="M0 17L17 0" stroke={STEEL} strokeWidth="2" /><path d="M6.500 7.500h3v3h-3z" fill="#fff" /></>,
  <><circle cx="8.500" cy="9" r="5" strokeWidth="1.800" /><path d="M8.500 0V5M8.500 13V18M0 9H5M12 9H18" stroke={STEEL} strokeWidth="1.800" /><circle cx="8.500" cy="9" r="1.500" /></>,
  <><path d="M2 1H6V17H2ZM6 4H16V12H6" fill="#fff" /><path d="M0 9H18" stroke={STEEL} strokeDasharray="3 1" /></>,
  <path d="M1 8L6 13M1 8L5 4M6 13L13 5L9 1L4 6M3 4L8 2M10 9L12 3" strokeWidth="1.700" />,
  <path d="M1 8L4 16L10 1H17M1 8H7" strokeWidth="2" />,
  <><path d="M0 2H18V10H0ZM9 2V10" fill="#fff" /><path d="M2 8C2 4 7 4 7 8ZM11 4h2v4h-2zM15 4h2v4h-2M16 6h1" /></>,
  <><path d="M0 17L6 11" strokeWidth="2.500" /><circle cx="10" cy="7" r="6" fill="#eee" /><path d="M7.500 10V4L12.500 10V4" /></>,
  <><path d="M1 1H15V12H1Z" fill="#fff" /><path d="M4.500 10L8 3L11.500 10M6 8H10" strokeWidth="1.800" /><path d="M6 17L8 12L10 17Z" fill="#222" /></>,
  <path d="M0 12H3L6 4H17L12 9L9 4L6 12M12 9V13L16 4" strokeWidth="1.600" />,
  <><path d="M1 1V8H9Z" fill={BLUE} stroke={DEEP} /><path d="M1 10C4 12 4 15 1 17M5 10C8 12 8 15 5 17M9 10C12 12 12 15 9 17" /></>,
  <><path d="M0 17L5 12" strokeWidth="2.500" /><path d="M3 7A6 6 0 0 1 15 7M4 10H16M2 7H16" /><path d="M7 12L9 8L11 12" /></>,
  <><path d="M4 1H12V12L8 16L4 12ZM6 1V12M10 1V12" fill="#ccc" /><path d="M1 1V12H4M12 12H15V1" strokeDasharray="2 1" /></>,
  <><path d="M1 1H15V15H1Z" fill="#fff" /><path d="M3.500 13L7 4L10.500 13M5 10H9" strokeWidth="1.600" /><circle cx="12" cy="4" r="1.500" /></>,
  <><circle cx="8" cy="9" r="7" fill="#fff" /><path d="M8 2A7 7 0 0 0 1 9H8ZM8 16A7 7 0 0 0 15 9H8Z" fill="#222" /></>,
  <path d="M0 4H12M12 2.500h3v3h-3z" strokeWidth="1.600" />,
  <path d="M0 4H7M10 4H18M7 2.500h3v3h-3z" strokeWidth="1.600" />,
];

const Funnel = <path d="M12 11H19V12.500L16.500 14.500V19H14.500V14.500L12 12.500Z" fill={STEEL} stroke={STEEL} strokeWidth=".6" />;

const funnels = (offsets: number[], fill: string, stroke: string) =>
  glyph(
    offsets.map((o) => (
      <path key={o} d={`M${o} ${o}H${o + 11}V${o + 3}L${o + 7} ${o + 6}V${o + 10}H${o + 4}V${o + 6}L${o} ${o + 3}Z`} fill={fill} stroke={stroke} strokeWidth=".9" />
    ))
  );
const FilterOff = glyph(<path d="M2 2H16V5L11 9V16H7V9L2 5Z" fill="#d0d0d0" stroke="#bbb" />);
const FilterClear = funnels([0.5, 3.5, 6.5], "#eee", "#c4c4c4");
const FilterAll = funnels([0.5, 3.5, 6.5], "#3b8fb6", "#123a4e");
const LassoIcon = glyph(<path d="M2 1V13L5 10L7 15L9 14L7 9H11ZM7 2L17 12M9 1L18 10V16L12 9" fill="#ddd" stroke="#c4c4c4" />);

const FilterBar = () => (
  <footer className="mt-1 flex h-[26px] shrink-0 items-center">
    <Grip className="ml-[3px] h-6 w-1" />
    <div className="ml-3 flex gap-[9px]">
      <IconButton icon={FilterOff} label="Filters off" />
      <IconButton icon={FilterClear} label="Clear filters" />
      <IconButton icon={FilterAll} label="All filters" />
    </div>
    <IconButton icon={Cursor} label="Select" className="ml-[3px] h-full w-7 border border-[#5a8fb0] bg-[#b3b3b3]" />
    <CaretButton label="Select options" className="h-full w-[13px] border border-[#aaa]" />
    <IconButton icon={LassoIcon} label="Magnified selection" className="ml-1.5" />
    <Divider className="mx-2 h-[22px] bg-[#888]" />
    <div className="flex gap-[7px]">
      {filterArt.map((art, i) => (
        <button key={i} type="button" aria-label={`Filter ${i + 1}`}>
          <svg viewBox="0 0 20 20" fill="none" stroke={INK} strokeWidth="1.200" className="size-5" aria-hidden="true">
            {art}
            {Funnel}
          </svg>
        </button>
      ))}
    </div>
    <Divider className="ml-2.5 h-full bg-[#888]" />
  </footer>
);

export default function App() {
  return (
    <div className="flex h-screen flex-col overflow-hidden bg-[#f6f6f6] font-['Open_Sans','Noto_Sans',sans-serif] text-[11px] leading-4 text-[#1a1a1a]">
      <TitleBar />
      <ToolbarRow />
      <Ribbon />
      <div className="flex min-h-0 flex-1">
        <div className="flex w-[277px] shrink-0 flex-col">
          <RibbonTabs />
          <div className="flex min-h-0 flex-1">
            <SideBar />
            <FeatureTree />
          </div>
        </div>
        <Viewport />
      </div>
      <StudyTabs />
      <FilterBar />
    </div>
  );
}
